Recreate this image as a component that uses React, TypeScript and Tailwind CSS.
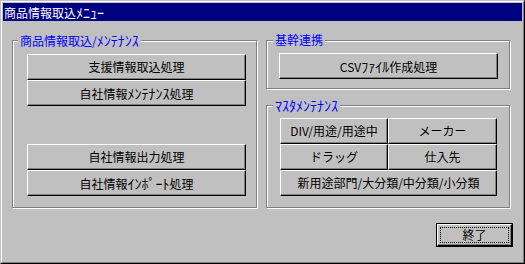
import React from "react";

const FONT = "font-['Noto_Sans_CJK_JP','Noto_Sans_CJK_SC',sans-serif]";

function K({ children }: { children: React.ReactNode }) {
  return <span className="text-[14px]">{children}</span>;
}

function Btn({ children, className = "" }: { children: React.ReactNode; className?: string }) {
  return (
    <div
      className={`flex items-center justify-center bg-[#c0c0c0] border border-t-white border-l-white border-r-black border-b-black shadow-[inset_-1px_-1px_0_#808080] text-[12px] leading-[12px] text-black whitespace-nowrap ${className}`}
    >
      <span>{children}</span>
    </div>
  );
}

function Group({
  label,
  labelLeft,
  className = "",
  children,
}: {
  label: React.ReactNode;
  labelLeft: string;
  className?: string;
  children: React.ReactNode;
}) {
  return (
    <div className={`relative border border-[#808080] shadow-[inset_1px_1px_0_#fff,1px_1px_0_#fff] ${className}`}>
      <span
        className={`absolute top-[-7px] ${labelLeft} bg-[#c0c0c0] px-[2px] text-[12px] leading-[12px] text-[#0000ff] whitespace-nowrap`}
      >
        {label}
      </span>
      {children}
    </div>
  );
}

export default function App() {
  return (
    <div
      className={`w-[525px] h-[264px] bg-[#c0c0c0] border border-t-[#c0c0c0] border-l-[#c0c0c0] border-r-black border-b-black ${FONT}`}
    >
      <div className="h-full border border-t-white border-l-white border-r-[#808080] border-b-[#808080] p-[1px] flex flex-col">
        <div className="h-[18px] shrink-0 bg-[#000080] text-white text-[12px] leading-[18px] pl-[1px] whitespace-nowrap">
          商品情報取込<K>ﾒﾆｭｰ</K>
        </div>
        <div className="flex-1 flex flex-col pl-[9px] pt-[19px]">
          <div className="flex gap-[9px]">
            <Group
              label={
                <>
                  商品情報取込/<K>ﾒﾝﾃﾅﾝｽ</K>
                </>
              }
              labelLeft="left-[5px]"
              className="w-[245px] h-[168px]"
            >
              <div className="flex flex-col pl-[14px] pt-[13px]">
                <Btn className="w-[219px] h-[26px]">支援情報取込処理</Btn>
                <Btn className="w-[219px] h-[26px]">
                  自社情報<K>ﾒﾝﾃﾅﾝｽ</K>処理
                </Btn>
                <Btn className="w-[219px] h-[26px] mt-[38px]">自社情報出力処理</Btn>
                <Btn className="w-[219px] h-[26px]">
                  自社情報<K>ｲﾝﾎﾟｰﾄ</K>処理
                </Btn>
              </div>
            </Group>
            <div className="flex flex-col">
              <Group label="基幹連携" labelLeft="left-[6px]" className="w-[244px] h-[49px]">
                <div className="pl-[12px] pt-[12px]">
                  <Btn className="w-[219px] h-[26px]">
                    CSV<K>ﾌｧｲﾙ</K>作成処理
                  </Btn>
                </div>
              </Group>
              <Group
                label={<K>ﾏｽﾀﾒﾝﾃﾅﾝｽ</K>}
                labelLeft="left-[6px]"
                className="w-[244px] h-[103px] mt-[16px]"
              >
                <div className="pl-[13px] pt-[12px]">
                  <div className="grid grid-cols-[108px_109px] grid-rows-[26px_26px_26px]">
                    <Btn>DIV/用途/用途中</Btn>
                    <Btn>メーカー</Btn>
                    <Btn>ドラッグ</Btn>
                    <Btn>仕入先</Btn>
                    <Btn className="col-span-2">新用途部門/大分類/中分類/小分類</Btn>
                  </div>
                </div>
              </Group>
            </div>
          </div>
          <div className="self-end mr-[9px] mt-[15px] relative w-[77px] h-[24px] border border-black">
            <div className="w-full h-full flex items-center justify-center bg-[#c0c0c0] border border-t-white border-l-white border-r-black border-b-black shadow-[inset_-1px_-1px_0_#808080] text-[12px] leading-[12px] text-black">
              終了
            </div>
            <span className="absolute inset-[3px] border border-dotted border-black pointer-events-none" />
          </div>
        </div>
      </div>
    </div>
  );
}
